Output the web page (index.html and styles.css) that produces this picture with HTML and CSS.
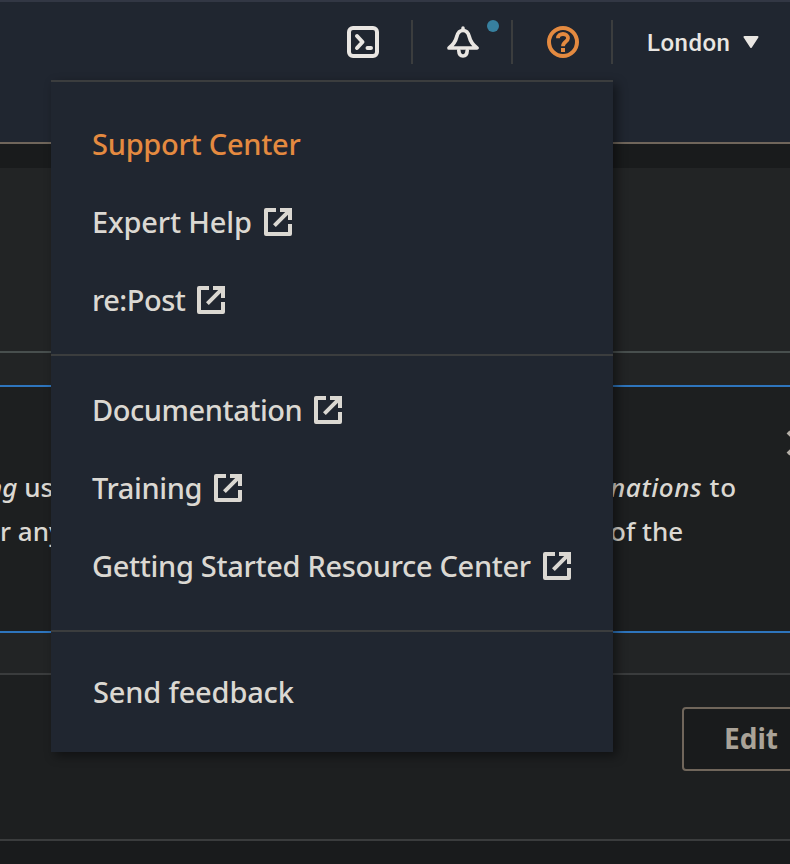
FILE: index.html
```html
<!DOCTYPE html>
<html lang="en">
<head>
<meta charset="utf-8">
<title>Console support menu</title>
<link rel="stylesheet" href="styles.css">
</head>
<body>
<svg width="0" height="0" class="defs" aria-hidden="true">
  <symbol id="external" viewBox="0 0 28 28">
    <path d="M12 2H2V26H26V16" fill="none" stroke="currentColor" stroke-width="4" stroke-linejoin="round"/>
    <path d="M16 0H28V12H24V6.8L11.8 19L9 16.2L21.2 4H16Z" fill="currentColor"/>
  </symbol>
</svg>
<header class="topbar">
  <div class="tool"><svg width="32" height="32" viewBox="0 0 32 32" fill="none" stroke="currentColor">
    <rect x="2" y="2" width="28" height="28" rx="4" stroke-width="4"/>
    <path d="M10 10L15.500 16L10 22M20.500 22H24" stroke-width="4" stroke-linecap="round" stroke-linejoin="round"/></svg></div>
  <div class="tool"><svg width="32" height="32" viewBox="0 0 32 32" fill="none" stroke="currentColor" stroke-linejoin="round" stroke-linecap="round">
    <path d="M16 2V4" stroke-width="3.500"/>
    <path d="M2 22C6 19 8.500 16 9.800 10.500C10.800 6.500 12.500 4.500 16 4.500S21.200 6.500 22.200 10.500C23.500 16 26 19 30 22Z" stroke-width="3.700"/>
    <path d="M11.800 24.500C12 28.500 14 30 16 30S20 28.500 20.200 24.500" stroke-width="3.700"/></svg><i class="dot"></i></div>
  <div class="tool help"><svg width="32" height="32" viewBox="0 0 32 32" fill="none" stroke="currentColor">
    <circle cx="16" cy="16" r="14" stroke-width="4"/>
    <path d="M11 12.200C11 9.500 13.100 8 16 8S21 9.700 21 12.300C21 15.500 16 15.500 16 20.200" stroke-width="3.800"/>
    <path d="M16 22V26" stroke-width="4"/></svg></div>
  <div class="region"><span>London</span><svg width="16" height="12" viewBox="0 0 16 12"><path d="M1.500 1H14.500L8 11Z" fill="currentColor" stroke="currentColor" stroke-width="2" stroke-linejoin="round"/></svg></div>
</header>
<main>
  <div class="strip"></div>
  <section class="hero"></section>
  <section class="flash">
    <svg class="close" width="28" height="28" viewBox="0 0 28 28"><path d="M3 3L25 25M25 3L3 25" stroke="currentColor" stroke-width="4"/></svg>
    <div class="line"><span class="left cut"><em>ng</em> us</span><span class="nations"><em>nations</em> to</span></div>
    <div class="line"><span class="left">r any</span><span>of the</span></div>
  </section>
  <section class="panel"><button class="edit">Edit</button></section>
</main>
<nav class="menu">
  <div class="group first">
    <a class="active"><span class="t1">Support Center</span></a>
    <a><span class="t2">Expert Help</span><svg class="ext"><use href="#external"/></svg></a>
    <a><span class="t3">re:Post</span><svg class="ext"><use href="#external"/></svg></a>
  </div>
  <div class="group second-group">
    <a><span class="t4">Documentation</span><svg class="ext"><use href="#external"/></svg></a>
    <a><span class="t5">Training</span><svg class="ext"><use href="#external"/></svg></a>
    <a><span class="t6">Getting Started Resource Center</span><svg class="ext"><use href="#external"/></svg></a>
  </div>
  <div class="group last"><a><span class="t7">Send feedback</span></a></div>
</nav>
</body>
</html>
```
FILE: styles.css
```css
* { box-sizing: border-box; }
body {
  margin: 0; height: 864px; overflow: hidden; position: relative;
  background: #191b1c; color: #dbd8d2;
  font: 550 29px/44px "Noto Sans", "Open Sans", sans-serif;
  font-stretch: 90%;
}
.defs { position: absolute; }
.topbar {
  height: 144px; padding-top: 18px; display: flex; justify-content: flex-end; align-items: flex-start;
  background: #202630; border-top: 2px solid #323744; border-bottom: 2px solid #70665b; color: #e9e6e2;
}
.tool {
  width: 100px; height: 44px; display: flex; align-items: center; justify-content: center;
  padding-left: 2px; border-right: 2px solid #3b3d3e; position: relative;
}
.tool svg { display: block; }
.dot { position: absolute; right: 12px; top: 0; width: 12px; height: 12px; border-radius: 50%; background: #37809f; }
.help { color: #e48a40; }
.region {
  width: 177px; height: 44px; padding: 1px 0 0 34px; display: flex; align-items: center; gap: 13px;
  font-family: Roboto, sans-serif; font-size: 24px; font-weight: 500; letter-spacing: .5px;
}
.region svg { position: relative; top: -1px; }
.strip { height: 24px; background: #191b1c; }
.hero { height: 185px; background: #222425; border-bottom: 2px solid #484f4e; }
.flash {
  height: 248px; margin-top: 32px; background: #1d1f20; position: relative; padding-top: 78px;
  border-top: 2px solid #2e75bd; border-bottom: 2px solid #2e75bd; overflow: hidden; font-size: 26px;
}
main { background: #222425; }
.close { position: absolute; left: 785px; top: 42px; color: #b4afa7; }
.line { display: flex; }
.left { width: 610px; }
.cut { text-indent: -13px; }
.nations { letter-spacing: .6px; }
.panel {
  height: 168px; margin-top: 40px; background: #1d1f20; padding-top: 32px; overflow: hidden;
  border-top: 2px solid #3a3c3d; border-bottom: 2px solid #3a3c3d;
}
.edit {
  display: block; margin-left: 682px; width: 138px; height: 64px; padding: 0 0 2px; color: #aaa398;
  background: #191b1c; border: 2px solid #70665b; border-radius: 4px; font: 700 28px "Noto Sans", sans-serif;
}
.menu {
  position: absolute; left: 51px; top: 80px; width: 562px; height: 672px;
  background: #202630; border-top: 2px solid #3b3d3e; box-shadow: 4px 4px 10px rgba(0,0,0,.45);
}
.group { border-bottom: 2px solid #3b3d3e; padding-left: 41px; }
.first { height: 274px; padding-top: 23px; }
.second-group { height: 276px; padding-top: 15px; }
.last { border: 0; padding-top: 21px; padding-left: 42px; }
.menu a { height: 78px; display: flex; align-items: center; gap: 12px; white-space: nowrap; }
.ext { width: 28px; height: 28px; flex: none; }
.active { color: #e48a40; }
.t1 { letter-spacing: -.25px; }
.t2 { letter-spacing: -.17px; }
.t3 { letter-spacing: -.5px; }
.t4 { letter-spacing: -.45px; }
.t5 { letter-spacing: -.38px; }
.t6 { letter-spacing: -.33px; }
.t7 { letter-spacing: -.17px; }
```
